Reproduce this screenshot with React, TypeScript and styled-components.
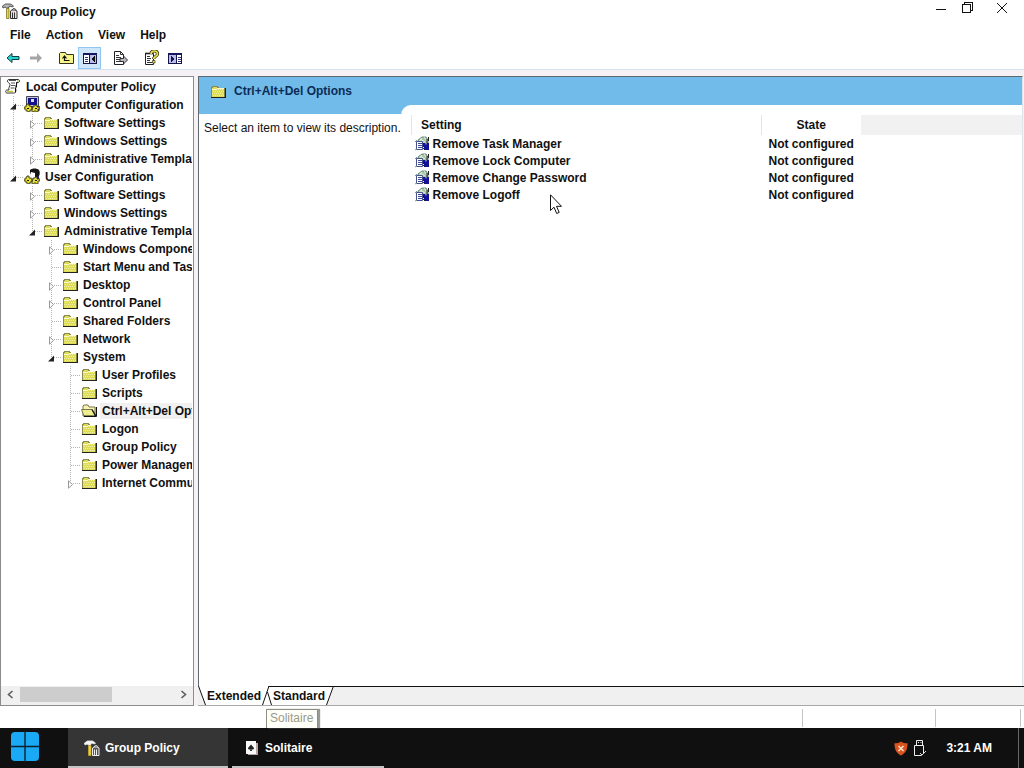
import React from "react";
import styled, { createGlobalStyle, css } from "styled-components";

const blue = "#71bbea";
const font = '12px/16px "Liberation Sans", Arial, sans-serif';

const GlobalStyle = createGlobalStyle`
  *, *::before, *::after { box-sizing: border-box; }
  html, body, #root { height: 100%; }
  body { margin: 0; background: #fff; color: #111; font: ${font}; font-weight: 700; overflow: hidden; }
  button { font: inherit; color: inherit; background: none; border: 0; padding: 0; margin: 0; }
  ul { list-style: none; margin: 0; padding: 0; }
  svg { display: block; flex: none; }
`;

const Desktop = styled.div`
  display: flex;
  flex-direction: column;
  height: 100%;
  position: relative;
`;

const TitleBar = styled.header`
  display: flex;
  align-items: flex-start;
  height: 24px;
  padding: 3px 0 0 2px;
`;

const Title = styled.h1`
  flex: 1;
  margin: 1px 0 0 3px;
  font: inherit;
`;

const WindowControls = styled.div`
  display: flex;
  margin-top: -3px;
`;

const WindowButton = styled.button<{ $wide?: boolean }>`
  display: flex;
  justify-content: center;
  width: ${(p) => (p.$wide ? 44 : 26)}px;
  height: 18px;
`;

const MenuBar = styled.nav`
  display: flex;
  gap: 15px;
  height: 22px;
  padding-left: 10px;
  align-items: center;
`;

const ToolBar = styled.div`
  display: flex;
  align-items: flex-end;
  height: 24px;
  padding-left: 1px;
  border-bottom: 1px solid #d6e2ee;
`;

const ToolButton = styled.button<{ $active?: boolean; $after?: number }>`
  display: flex;
  align-items: center;
  justify-content: center;
  width: 23px;
  height: 22px;
  margin-right: ${(p) => p.$after ?? 0}px;
  border: 1px solid ${(p) => (p.$active ? "#92c6f0" : "transparent")};
  background: ${(p) => (p.$active ? "#cfe6fa" : "none")};
`;

const Workspace = styled.main`
  flex: 1;
  min-height: 0;
  display: grid;
  grid-template-columns: 194px 1fr;
  gap: 4px;
  padding-top: 6px;
  background: #f5f1f4;
`;

const TreePane = styled.aside`
  display: flex;
  flex-direction: column;
  min-width: 0;
  border: 1px solid #8c8c8c;
  background: #fff;
`;

const Tree = styled.ul`
  flex: 1;
  overflow: hidden;
  padding: 1px 1px 0 3px;
`;

const TreeRow = styled.li`
  display: flex;
  align-items: center;
  height: 18px;
  overflow: hidden;
  white-space: nowrap;
`;

const TreeIcon = styled.span`
  flex: none;
  width: 16px;
  margin: 0 3px 2px 1px;
`;

const TreeLabel = styled.span<{ $selected?: boolean }>`
  flex: ${(p) => (p.$selected ? 1 : "none")};
  padding: 0 2px;
  background: ${(p) => (p.$selected ? "#f0f0f0" : "none")};
`;

type Line = "none" | "full" | "top" | "bottom";

const dots = "#b4b4b4 0 1px, transparent 1px 2px";
const Guide = styled.span<{ $line: Line; $branch?: boolean }>`
  flex: none;
  display: flex;
  align-items: center;
  justify-content: center;
  width: 19px;
  height: 18px;
  background-repeat: no-repeat;
  background-image: repeating-linear-gradient(to bottom, ${dots}),
    repeating-linear-gradient(to right, ${dots});
  background-size: ${(p) =>
      p.$line === "none" ? "0 0" : p.$line === "full" ? "1px 18px" : "1px 9px"},
    ${(p) => (p.$branch ? "9px 1px" : "0 0")};
  background-position: 9px ${(p) => (p.$line === "bottom" ? 9 : 0)}px, 10px 9px;
`;

const Toggle = styled.button`
  display: flex;
  padding-top: 3px;
`;

const ScrollBar = styled.div`
  display: flex;
  align-items: center;
  height: 19px;
  padding-bottom: 2px;
  background: #f0f0f0;
`;

const ScrollButton = styled.button`
  display: flex;
  align-items: center;
  justify-content: center;
  width: 19px;
  height: 17px;
`;

const ScrollTrack = styled.div`
  flex: 1;
  height: 15px;
`;

const ScrollThumb = styled.div`
  width: 60%;
  height: 100%;
  background: #cdcdcd;
`;

const DetailPane = styled.section`
  display: flex;
  flex-direction: column;
  min-width: 0;
  border-bottom: 1px solid #a8a8a8;
`;

const DetailFrame = styled.div`
  flex: 1;
  display: flex;
  flex-direction: column;
  margin-right: 1px;
  border: solid #5f6a70;
  border-width: 1px 0 0 1px;
  background: #fff;
  border-right: 1px solid #dfe6ea;
`;

const DetailHeader = styled.h2`
  display: flex;
  align-items: center;
  gap: 8px;
  height: 28px;
  margin: 0;
  padding-left: 11px;
  background: ${blue};
  color: #0d2c55;
  font: inherit;
`;

const DetailBody = styled.div`
  flex: 1;
  display: grid;
  grid-template-columns: 202px 1fr;
`;

const Description = styled.p`
  margin: 0;
  padding: 6px 0 0 5px;
  border-top: 9px solid ${blue};
  font-weight: 400;
  white-space: nowrap;
`;

const ListCorner = styled.div`
  background: linear-gradient(${blue} 9px, #fff 9px);
`;

const ListSheet = styled.div`
  height: 100%;
  padding: 10px 0 0 10px;
  border-top-left-radius: 10px;
  background: #fff;
`;

const SettingsTable = styled.table`
  width: 100%;
  border-collapse: collapse;
  table-layout: fixed;
`;

const HeadCell = styled.th<{ $width?: number; $filler?: boolean; $center?: boolean }>`
  height: 20px;
  padding: 0 ${(p) => (p.$center ? 0 : 9)}px;
  ${(p) => p.$width && css`width: ${p.$width}px;`}
  text-align: ${(p) => (p.$center ? "center" : "left")};
  border-left: ${(p) => (p.$filler ? 0 : "1px solid #e5e5e5")};
  background: ${(p) => (p.$filler ? "#f1f1f1" : "#fff")};
`;

const Cell = styled.td`
  height: 17px;
  padding: 0 0 0 7px;
`;

const SettingName = styled.div`
  display: flex;
  align-items: center;
  gap: 3px;
  margin-left: -4px;
`;

const TabStrip = styled.div`
  display: flex;
  height: 19px;
  background: #f0f0f0;
`;

const Tab = styled.button<{ $active?: boolean }>`
  height: 19px;
  padding: 0 1px 1px;
  background: #fff;
  border-top: 1px solid ${(p) => (p.$active ? "#fff" : "#111")};
`;

const TabRule = styled.div`
  flex: 1;
  border-top: 1px solid #111;
`;

const StatusBar = styled.footer`
  display: flex;
  justify-content: flex-end;
  height: 22px;
  padding: 3px 3px 1px 0;
  background: #fff;
`;

const StatusCell = styled.div<{ $width: number }>`
  width: ${(p) => p.$width}px;
  border-left: 1px solid #c4c4c4;
`;

const TaskBar = styled.nav`
  display: flex;
  height: 40px;
  background: #101010;
  color: #fff;
`;

const StartButton = styled.button`
  display: flex;
  align-items: flex-start;
  width: 68px;
  padding: 3px 0 0 10px;
`;

const TaskButton = styled.button<{ $active?: boolean }>`
  display: flex;
  align-items: center;
  gap: 5px;
  width: ${(p) => (p.$active ? 160 : 152)}px;
  margin-right: 4px;
  padding-left: ${(p) => (p.$active ? 16 : 12)}px;
  padding-top: 2px;
  border-bottom: 2px solid #c4c4c4;
  background: ${(p) => (p.$active ? "#353535" : "none")};
`;

const Tray = styled.div`
  display: flex;
  align-items: center;
  gap: 5px;
  margin-left: auto;
`;

const Clock = styled.time`
  margin-left: 14px;
  padding-right: 31px;
`;

const ShowDesktop = styled.button`
  width: 6px;
  height: 40px;
  border-left: 1px solid #686868;
  margin-left: -5px;
`;

const Tooltip = styled.div`
  position: absolute;
  left: 266px;
  bottom: 40px;
  height: 19px;
  padding: 0 4px 0 3px;
  border: 1px solid #8e8e80;
  border-bottom: 0;
  background: #fffffa;
  color: #9a9a8a;
  box-shadow: 2px 0 1px #999;
  font-weight: 400;
`;

const Pointer = styled.div`
  position: absolute;
  left: 550px;
  top: 194px;
  pointer-events: none;
`;

const FolderIcon = () => (
  <svg width="16" height="14" viewBox="0 0 16 14" shapeRendering="crispEdges">
    <path d="M1 3h1V2h5v1h1v1h7v9H1z" fill="#dcdc58" />
    <path d="M1 13V3h1V2h5v1h1v1h7" fill="none" stroke="#8a8a52" />
    <path d="M2 5h12M3 7h11M2 9h12M3 11h11" stroke="#f0f0a0" strokeDasharray="1 1" />
    <path d="M2 5h5l1-1h6" stroke="#fffbd0" fill="none" />
    <path d="M15.500 4v10M1 13.500h15" stroke="#222" />
    <path d="M14.500 5v8" stroke="#82823c" />
  </svg>
);

const OpenFolderIcon = () => (
  <svg width="16" height="14" viewBox="0 0 16 14">
    <path d="M2 13V3l1-1h4l1 2h6v9z" fill="#f7f5b3" stroke="#77774a" />
    <path d="M.5 6.500h10.500l3.500 6.500H3z" fill="#eeee8e" stroke="#77774a" />
    <path d="M11 6.500l4 7M3 13.500h12.500M15.500 4v9.500" stroke="#111" strokeWidth="1.300" />
  </svg>
);

const PolicyIcon = () => (
  <svg width="16" height="16" viewBox="0 0 16 16">
    <path d="M4 1.500h9c2 0 2 3 0 3h-1.500c1 2-1 3-1 5s1 3 0 4.500c-.5 1-1 1-2 1H2c-2 0-1.500-3 0-3h2c-1-2 1-3.500 1-5.500C5 5 2 4.500 2.500 3c0-1 .5-1.500 1.500-1.500z" fill="#fff" stroke="#333" />
    <path d="M4 2.500h7M6 5h4M6 7.500h4M5.500 10h4" stroke="#555" />
    <path d="M2 13.500h6M12 3h1.500" stroke="#c4c43c" strokeWidth="1.500" />
    <path d="M11.500 4.500v5M10.500 10v4.500" stroke="#111" />
  </svg>
);

const Cogs = () => (
  <>
    <path d="M0 11h2V9h1V8h2v2h2v1h1v3H6v2H4v-1H2v-2H0zM8 12h1v-2h2v-1h2v2h3v2h-2v3h-2v-1h-2v1H8z" fill="#e6df38" stroke="#29290c" strokeWidth=".8" />
    <path d="M3 12.500h2M11 12.500h2" stroke="#111" />
  </>
);

const ComputerIcon = () => (
  <svg width="16" height="16" viewBox="0 0 16 16">
    <path d="M2.500.5h12v10h-12z" fill="#c6c6d0" stroke="#44445c" />
    <path d="M4 2h9v7H4z" fill="#12128c" />
    <path d="M7 3h3v3H7z" fill="#d8dcff" />
    <path d="M13.500 10h2v5h-4z" fill="#33337e" />
    <Cogs />
  </svg>
);

const UserIcon = () => (
  <svg width="16" height="16" viewBox="0 0 16 16">
    <path d="M6 2c2-2 7-2 9 0 1 2 1 4 0 6l-1 4-3 1-3-3-2-4z" fill="#151515" />
    <path d="M7 4l4 1v4l2 1-2 2-3-2-2-3z" fill="#fff" />
    <path d="M12 9l3-1v4l-3 2z" fill="#26268a" />
    <Cogs />
  </svg>
);

const GpIcon = ({ light }: { light?: boolean }) => {
  const ink = light ? "#eee" : "#333";
  return (
    <svg width="16" height="16" viewBox="0 0 16 16">
      <path d="M.5 3l3-2h5l3 2-1 1-3-1-1 2H4.500L3 4 1 5z" fill={light ? "#f6f6f6" : "#b9b9b9"} stroke={ink} strokeWidth=".8" />
      <path d="M4.500 5.500h2.500V15.500H4.500z" fill="#ecd43c" stroke={light ? "#c9a72a" : "#6c6420"} strokeWidth=".7" />
      <path d="M8.500 8v7.500h6.500V8l-2-1h-3zM10.500 9.500v6M12.500 9.500v6" fill={light ? "#555" : "#f3dfe2"} stroke={ink} />
      <path d="M10 7c1-2 3-2 4 0" fill="none" stroke={ink} />
    </svg>
  );
};

const SettingIcon = () => (
  <svg width="15" height="15" viewBox="0 0 15 15">
    <path d="M3 4l4-3h4l2 3v4H4z" fill="#a9c7a4" stroke="#4a7064" strokeWidth=".8" />
    <path d="M5 3l5 3M9 1l3 4M4 6l3-4" stroke="#e9f5e4" strokeWidth=".9" />
    <path d="M1.500 5.500h6v8h-6z" fill="#fff" stroke="#48508c" />
    <path d="M3 7.500h4M3 9.500h4M3 11.500h4" stroke="#3c4896" />
    <path d="M0 6l2-2M0 14l2-1" stroke="#709c96" />
    <path d="M8 7h2l1 2 1-2h2v7H9v-3H8z" fill="#10109a" />
    <path d="M8 12l2 2M12 3v4M13.500 1v4" stroke="#222" />
  </svg>
);

const ArrowIcon = ({ back }: { back?: boolean }) => (
  <svg width="14" height="12" viewBox="0 0 14 12">
    {back ? (
      <path d="M1 6l5-4.500v3h7v3H6v3z" fill="#25d4d0" stroke="#123f40" />
    ) : (
      <path d="M13 6L8 1v3.500H1v3h7V11z" fill="#a5a5a5" />
    )}
  </svg>
);

const UpFolderIcon = () => (
  <svg width="16" height="14" viewBox="0 0 16 14">
    <path d="M.5 12.500v-10l1-1h5l1 2h7v9z" fill="#f8f58c" stroke="#333316" />
    <path d="M5.500 5v4.500h5M3.500 7.500l2-2.500 2 2.500" fill="none" stroke="#111" strokeWidth="1.200" />
  </svg>
);

const PanelIcon = ({ flip }: { flip?: boolean }) => (
  <svg width="14" height="13" viewBox="0 0 14 13" shapeRendering="crispEdges">
    <path d="M.5 1.500h13v10H.5z" fill="#fff" stroke="#15154a" />
    <path d="M0 1h14v2H0z" fill="#17175e" />
    {flip ? (
      <>
        <path d="M1 3h7v8H1z" fill="#b8bbe8" />
        <path d="M8.500 2v10" stroke="#15154a" />
        <path d="M3 4v6l4-3z" fill="#15154a" />
        <path d="M10 5.500h3M10 7.500h3M10 9.500h3" stroke="#35357a" />
      </>
    ) : (
      <>
        <path d="M7 3h6v8H7z" fill="#b8bbe8" />
        <path d="M6.500 2v10" stroke="#15154a" />
        <path d="M12 4v6L8 7z" fill="#111" />
        <path d="M2 5.500h3M2 7.500h3M2 9.500h3" stroke="#35357a" />
      </>
    )}
  </svg>
);

const ExportIcon = () => (
  <svg width="15" height="15" viewBox="0 0 15 15">
    <path d="M1.500.5h6l3 3v10h-9z" fill="#fff" stroke="#222" />
    <path d="M7.500.5v3h3M3 4.500h3M3 6.500h5M3 8.500h4M3 10.500h4" fill="none" stroke="#333" />
    <path d="M7 7.500h3.500V5l4 4-4 4v-2.500H7z" fill="#b8b8c0" stroke="#222" strokeWidth=".9" />
  </svg>
);

const HelpIcon = () => (
  <svg width="15" height="16" viewBox="0 0 15 16">
    <path d="M1.500 3.500h8v11h-8z" fill="#fff" stroke="#222" />
    <path d="M1 3.500h8" stroke="#222" strokeWidth="1.600" />
    <path d="M3 6.500h3M3 8.500h4M3 10.500h3M3 12.500h5" stroke="#333" />
    <path d="M7 4c0-4 6.500-4 6.500 0 0 2.500-4 2.500-4 5" fill="none" stroke="#333312" strokeWidth="3.200" />
    <path d="M7 4c0-4 6.500-4 6.500 0 0 2.500-4 2.500-4 5" fill="none" stroke="#e8de4c" strokeWidth="1.700" />
    <path d="M8.500 10.500h2.500v2.500H8.500z" fill="#e8de4c" stroke="#333312" strokeWidth=".7" />
  </svg>
);

const Chevron = ({ right }: { right?: boolean }) => (
  <svg width="7" height="9" viewBox="0 0 7 9">
    <path d={right ? "M1.500 1l4 3.500-4 3.500" : "M5.500 1l-4 3.500 4 3.500"} fill="none" stroke="#5c5c5c" strokeWidth="1.600" />
  </svg>
);

const ToggleIcon = ({ open }: { open?: boolean }) => (
  <svg width="7" height="9" viewBox="0 0 7 9">
    {open ? (
      <path d="M6 1.500V7.500H0z" fill="#222" />
    ) : (
      <path d="M1.500.8v7.400l4-3.700z" fill="#fff" stroke="#9a9a9a" />
    )}
  </svg>
);

type Kind = "policy" | "computer" | "user" | "folder" | "open";
interface TreeNode {
  name: string;
  kind: Kind;
  open?: boolean;
  toggle?: boolean;
  children?: TreeNode[];
}

const folder = (name: string, toggle = false): TreeNode => ({ name, kind: "folder", toggle });

const policyTree: TreeNode = {
  name: "Local Computer Policy",
  kind: "policy",
  children: [
    {
      name: "Computer Configuration",
      kind: "computer",
      open: true,
      toggle: true,
      children: [
        folder("Software Settings", true),
        folder("Windows Settings", true),
        folder("Administrative Templates", true),
      ],
    },
    {
      name: "User Configuration",
      kind: "user",
      open: true,
      toggle: true,
      children: [
        folder("Software Settings", true),
        folder("Windows Settings", true),
        {
          ...folder("Administrative Templates", true),
          open: true,
          children: [
            folder("Windows Components", true),
            folder("Start Menu and Taskbar"),
            folder("Desktop", true),
            folder("Control Panel", true),
            folder("Shared Folders"),
            folder("Network", true),
            {
              ...folder("System", true),
              open: true,
              children: [
                folder("User Profiles"),
                folder("Scripts"),
                { name: "Ctrl+Alt+Del Options", kind: "open" },
                folder("Logon"),
                folder("Group Policy"),
                folder("Power Management"),
                folder("Internet Communication", true),
              ],
            },
          ],
        },
      ],
    },
  ],
};

const icons: Record<Kind, React.FC> = {
  policy: PolicyIcon,
  computer: ComputerIcon,
  user: UserIcon,
  folder: FolderIcon,
  open: OpenFolderIcon,
};

function Branch({ node, guides, last, root }: { node: TreeNode; guides: boolean[]; last?: boolean; root?: boolean }) {
  const Icon = icons[node.kind];
  const inner = root ? [] : [...guides, !last];
  return (
    <>
      <TreeRow role="treeitem" aria-selected={node.kind === "open"} aria-level={root ? 1 : guides.length + 2}>
        {guides.map((on, i) => (
          <Guide key={i} $line={on ? "full" : "none"} />
        ))}
        {!root && (
          <Guide $line={last ? "top" : "full"} $branch>
            {node.toggle && (
              <Toggle aria-label={(node.open ? "Collapse " : "Expand ") + node.name}>
                <ToggleIcon open={node.open} />
              </Toggle>
            )}
          </Guide>
        )}
        <TreeIcon>
          <Icon />
        </TreeIcon>
        <TreeLabel $selected={node.kind === "open"}>{node.name}</TreeLabel>
      </TreeRow>
      {node.children?.map((child, i, all) => (
        <Branch key={child.name} node={child} guides={inner} last={i === all.length - 1} />
      ))}
    </>
  );
}

const settings = ["Remove Task Manager", "Remove Lock Computer", "Remove Change Password", "Remove Logoff"];

export default function App() {
  return (
    <Desktop>
      <GlobalStyle />
      <TitleBar>
        <GpIcon />
        <Title>Group Policy</Title>
        <WindowControls>
          <WindowButton aria-label="Minimize">
            <svg width="12" height="18" shapeRendering="crispEdges"><path d="M1 9.500h10" stroke="#111" /></svg>
          </WindowButton>
          <WindowButton aria-label="Restore">
            <svg width="12" height="18" shapeRendering="crispEdges">
              <path d="M1.500 4.500h8v8h-8zM3.500 4V2.500h8v8H10" fill="none" stroke="#111" />
            </svg>
          </WindowButton>
          <WindowButton aria-label="Close" $wide>
            <svg width="12" height="18"><path d="M1 3l10 10M11 3L1 13" stroke="#111" /></svg>
          </WindowButton>
        </WindowControls>
      </TitleBar>
      <MenuBar aria-label="Menu">
        {["File", "Action", "View", "Help"].map((name) => (
          <button key={name}>{name}</button>
        ))}
      </MenuBar>
      <ToolBar role="toolbar">
        <ToolButton aria-label="Back"><ArrowIcon back /></ToolButton>
        <ToolButton aria-label="Forward" $after={8}><ArrowIcon /></ToolButton>
        <ToolButton aria-label="Up one level"><UpFolderIcon /></ToolButton>
        <ToolButton aria-label="Show or hide tree" $active $after={8}><PanelIcon /></ToolButton>
        <ToolButton aria-label="Export list" $after={8}><ExportIcon /></ToolButton>
        <ToolButton aria-label="Help"><HelpIcon /></ToolButton>
        <ToolButton aria-label="Show or hide actions"><PanelIcon flip /></ToolButton>
      </ToolBar>
      <Workspace>
        <TreePane>
          <Tree role="tree" aria-label="Policy tree">
            <Branch node={policyTree} guides={[]} root />
          </Tree>
          <ScrollBar>
            <ScrollButton aria-label="Scroll left"><Chevron /></ScrollButton>
            <ScrollTrack><ScrollThumb /></ScrollTrack>
            <ScrollButton aria-label="Scroll right"><Chevron right /></ScrollButton>
          </ScrollBar>
        </TreePane>
        <DetailPane>
          <DetailFrame>
            <DetailHeader>
              <FolderIcon />
              Ctrl+Alt+Del Options
            </DetailHeader>
            <DetailBody>
              <Description>Select an item to view its description.</Description>
              <ListCorner>
                <ListSheet>
                  <SettingsTable>
                    <thead>
                      <tr>
                        <HeadCell $width={350}>Setting</HeadCell>
                        <HeadCell $width={99} $center>State</HeadCell>
                        <HeadCell $filler as="td" />
                      </tr>
                    </thead>
                    <tbody>
                      {settings.map((name) => (
                        <tr key={name}>
                          <Cell><SettingName><SettingIcon />{name}</SettingName></Cell>
                          <Cell>Not configured</Cell>
                          <Cell />
                        </tr>
                      ))}
                    </tbody>
                  </SettingsTable>
                </ListSheet>
              </ListCorner>
            </DetailBody>
          </DetailFrame>
          <TabStrip role="tablist">
            <svg width="8" height="19">
              <path d="M0 0h8v19z" fill="#fff" />
              <path d="M.5 0L7.500 19" stroke="#111" />
            </svg>
            <Tab role="tab" aria-selected $active>Extended</Tab>
            <svg width="10" height="19">
              <path d="M0 0h10v19H0z" fill="#fff" />
              <path d="M6.500 .5h4M7 0L.5 19M5.500 6L9.500 19" stroke="#111" fill="none" />
            </svg>
            <Tab role="tab" aria-selected={false}>Standard</Tab>
            <svg width="8" height="19">
              <path d="M0 0h8L1 19H0z" fill="#fff" />
              <path d="M0 .5h8M7.500 0L.5 19" stroke="#111" />
            </svg>
            <TabRule />
          </TabStrip>
        </DetailPane>
      </Workspace>
      <StatusBar>
        <StatusCell $width={133} />
        <StatusCell $width={85} />
        <StatusCell $width={1} />
      </StatusBar>
      <TaskBar aria-label="Taskbar">
        <StartButton aria-label="Start">
          <svg width="30" height="31" viewBox="0 0 30 31">
            <rect x="1" y="1" width="28" height="29" rx="4" fill="#19a9f5" />
            <path d="M15 0v31M0 15.500h30" stroke="#10222e" strokeWidth="1.400" />
          </svg>
        </StartButton>
        <TaskButton $active><GpIcon light />Group Policy</TaskButton>
        <TaskButton>
          <svg width="16" height="16" viewBox="0 0 16 16">
            <path d="M4 3h10v12H4z" fill="#b9a4a4" />
            <path d="M2 1h10v13H2z" fill="#f8f8f8" />
            <path d="M7 4.500l3 3.500c0 1.500-1.500 2-2.500 1l.5 2H6l.5-2C5.500 10 4 9.500 4 8z" fill="#222" />
          </svg>
          Solitaire
        </TaskButton>
        <Tray>
          <svg width="14" height="15" viewBox="0 0 14 15">
            <path d="M7 .5C9 2 11 2.300 13.500 2.300c0 6-1.500 9.700-6.500 12.200C2 12 .5 8.300.5 2.300 3 2.300 5 2 7 .5z" fill="#d9531e" />
            <path d="M4.500 5l5 5M9.500 5l-5 5" stroke="#ffe3cc" strokeWidth="1.500" />
          </svg>
          <svg width="14" height="18" viewBox="0 0 14 18">
            <path d="M3.500 6V1.500h6V6M1.500 6.500h9v8l-2 2h-7z" fill="none" stroke="#eee" />
            <path d="M5 3.500h1M7.500 3.500h1" stroke="#eee" />
            <path d="M7 14l2 2 4-4" fill="none" stroke="#ddd" />
          </svg>
          <Clock>3:21 AM</Clock>
        </Tray>
        <ShowDesktop aria-label="Show desktop" />
      </TaskBar>
      <Tooltip role="tooltip">Solitaire</Tooltip>
      <Pointer>
        <svg width="12" height="21" viewBox="0 0 12 21">
          <path d="M.5.8v15.700l3.500-3.300 2.700 6.300 2.500-1.100-2.700-6.100h5z" fill="#fff" stroke="#111" />
        </svg>
      </Pointer>
    </Desktop>
  );
}
